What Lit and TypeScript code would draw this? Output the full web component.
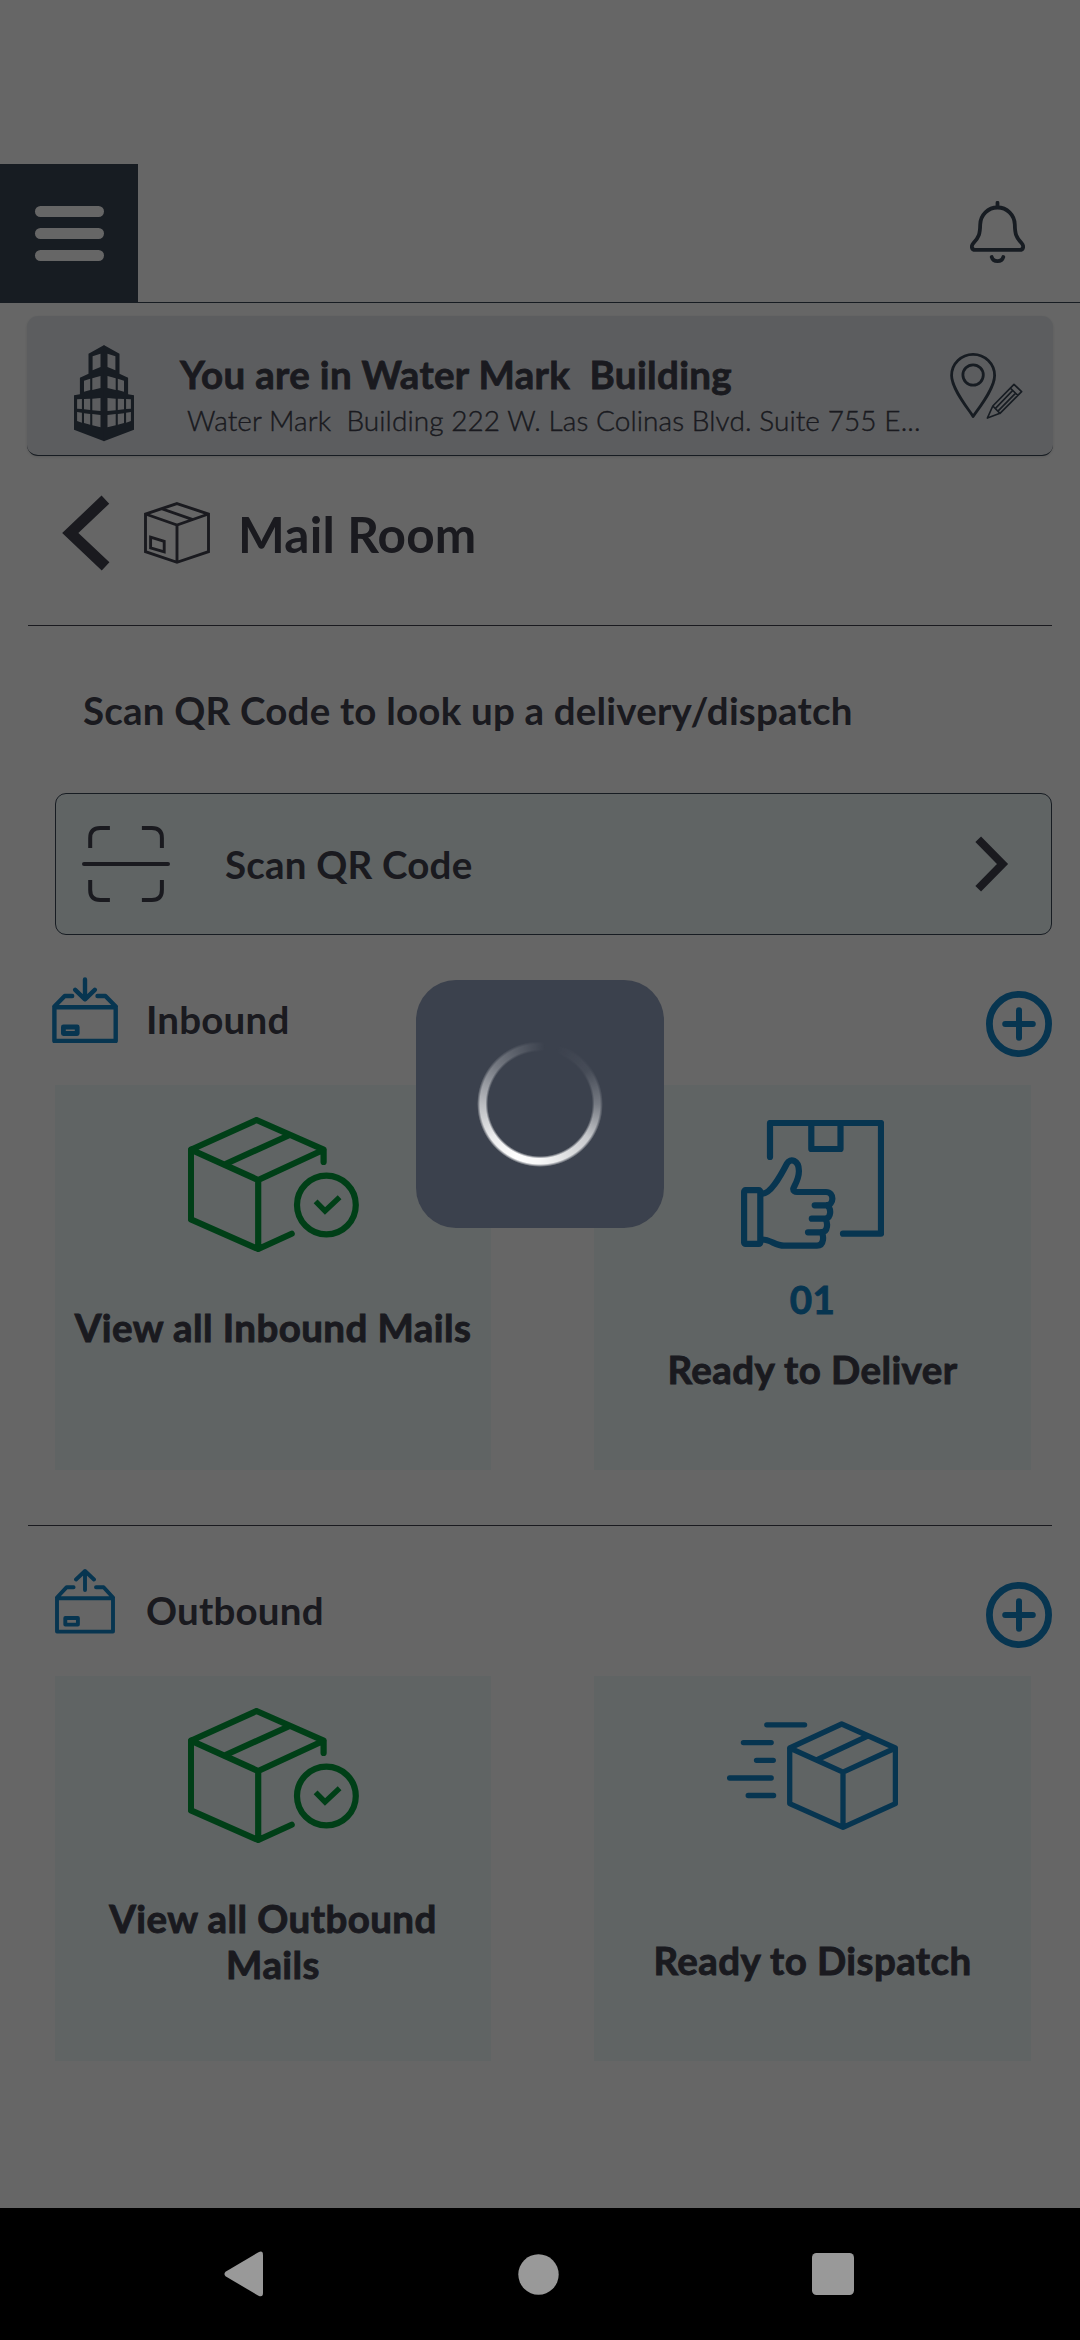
import { LitElement, html, svg, css } from "lit";
import { customElement, property } from "lit/decorators.js";

const parcelCheck = html`<svg class="ico green" width="171" height="135" viewBox="0 0 171 135" stroke-width="6.2">
  <path d="M135.6 45V32.7L68.5 3L2.9 32.7V102.3L70.2 132L103.7 116.7M2.9 32.7L70.2 63L135.6 32.7M70.2 63V132M101.6 18L37.5 47" />
  <circle cx="138.4" cy="88" r="29.4" />
  <path stroke-width="5.4" stroke-linecap="butt" stroke-linejoin="miter" d="M127.6 84.4L137 94L151.6 80.2" />
</svg>`;

const thumbBox = html`<svg class="ico blue" width="143" height="129" viewBox="0 0 143 129" stroke-width="6.2">
  <path d="M29 37V3H140V113.7H102M70.3 3V29H99.5V3" />
  <rect x="3.1" y="70.2" width="16.2" height="53.7" rx="1.5" />
  <path d="M21 73.5C29 74.5 39 57 46 43.5C49 37.5 58 40 57.9 51C58 60 52.4 67 52.2 69C52.2 71 54 72 56 72H85C93.5 72 93.5 85.3 85 85.3H73.7M86 85.3C90.5 88 90.5 98.7 84 98.7H70.8M84 98.7C87 102 87.5 112.3 80 112.3H67M80 112.3C83 115 83.5 125.7 76 125.7H43C34 125.7 30 119.5 21 119.5" />
</svg>`;

const parcelSpeed = html`<svg class="ico blue" width="171" height="111" viewBox="0 0 171 111" stroke-width="5.3">
  <path d="M114.7 4L168.4 28V83.6L116 107.3L62.7 83.6V28ZM62.7 28L116 52.2L168.4 28M116 52.2V107.3M140.8 16L89.5 40" />
  <path d="M39.8 4.8H77.6M16.4 22.6H44.2M29.5 40.3H46.3M2.6 58H44.2M21.2 75.5H46.6" />
</svg>`;

const inboundIcon = html`<svg class="ico blue" width="66" height="66" viewBox="0 0 66 66" stroke-width="4.4">
  <path d="M2.4 30.3H63.7V64H2.4ZM2.4 29.5L12.7 19H20.2M45.5 19H53.4L63.7 29.5M33 2.4V22.3M23.2 12.8L33 22.3L42.8 12.8" />
  <rect x="11.4" y="50" width="13.8" height="6.5" stroke-width="4.8" />
</svg>`;

const outboundIcon = html`<svg class="ico blue" width="60" height="66" viewBox="0 0 60 66" stroke-width="3.9">
  <path d="M2 30.3H58V63.6H2ZM2 29.5L11.7 19.2H18.6M41 19.2H48.6L58 29.5M30 3V22M21 11.5L30 3L39 11.5" />
  <rect x="10.3" y="50" width="12.6" height="6.6" />
</svg>`;

const plusIcon = html`<svg class="ico blue" width="66" height="66" viewBox="0 0 66 66">
  <circle cx="33" cy="33" r="29.6" stroke-width="6.8" />
  <path stroke-width="6" d="M19.2 33H46.8M33 19.2V46.8" />
</svg>`;

const towerHalf = svg`<path fill-rule="evenodd" d="M30.2 0L14.5 8.7V28.7L5.9 32.7V49.3L0 50.3V84.7L30.2 96.3Z
  M18.6 11.3L26.5 8.7V22L18.6 25.3Z
  M10 35.7L16.2 33.7V45L10 46.7Z M18.3 33.3L26.5 31V43L18.3 45Z
  M3.1 54.3L7.9 54V64L3.1 63.7Z M10 54L16.2 53.7V65L10 64.3Z M18.3 53.7L26.5 53V66L18.3 65.3Z
  M3.1 67L7.9 67.7V77.7L3.1 76Z M10 68.3L16.2 69V79.7L10 78Z M18.3 69L26.5 70V82.3L18.3 80.3Z" />`;

@customElement("mail-tile")
class MailTile extends LitElement {
  @property() label = "";
  @property() count: string | null = null;
  @property({ type: Boolean }) low = false;
  @property({ attribute: false }) icon: unknown = null;

  static styles = css`
    :host {
      display: flex;
      flex-direction: column;
      align-items: center;
      box-sizing: border-box;
      height: 385px;
      padding: 32px 16px 0;
      background: #eff9fa;
      font: 700 38.5px/46px Lato, "Liberation Sans", sans-serif;
      letter-spacing: 0.42px;
      -webkit-text-stroke: 0.9px currentColor;
      color: #41434f;
      text-align: center;
    }
    .art {
      display: flex;
      align-items: center;
      height: 135px;
    }
    .ico {
      display: block;
      fill: none;
      stroke-linecap: round;
      stroke-linejoin: round;
    }
    .green { stroke: #009e3a; }
    .blue { stroke: #1284c8; }
    .count {
      height: 46px;
      margin: 24px 0;
      color: #1284c8;
    }
    .high { margin-top: 52px; }
  `;

  render() {
    return html`
      <div class="art">${this.icon}</div>
      ${this.low ? html`<div class="count">${this.count}</div>` : null}
      <div class=${this.low ? "label" : "label high"}>${this.label}</div>
    `;
  }
}

@customElement("app-root")
class AppRoot extends LitElement {
  static styles = css`
    :host {
      display: block;
      position: relative;
      width: 1080px;
      height: 2340px;
      overflow: hidden;
      background: #fff;
      color: #41434f;
      font-family: Lato, "Liberation Sans", sans-serif;
      letter-spacing: 0.2px;
    }
    .screen {
      display: flex;
      flex-direction: column;
      height: 2208px;
    }
    svg { display: block; flex: none; }
    .ico {
      fill: none;
      stroke-linecap: round;
      stroke-linejoin: round;
    }
    .blue { stroke: #1284c8; }
    .header {
      display: flex;
      justify-content: space-between;
      align-items: flex-start;
      height: 138px;
      margin-top: 164px;
      border-bottom: 1px solid #3a4656;
    }
    .menu {
      display: flex;
      flex-direction: column;
      align-items: center;
      justify-content: center;
      gap: 11px;
      width: 138px;
      height: 138px;
      background: #3a4656;
    }
    .menu i {
      width: 69px;
      height: 11px;
      border-radius: 6px;
      background: #fff;
    }
    .bell { margin: 37px 55px 0 0; }
    .dark { stroke: #3a4656; }
    .place {
      display: flex;
      box-sizing: border-box;
      height: 140px;
      margin: 13px 27px 0;
      border-bottom: 1px solid #3a4656;
      border-radius: 11px;
      background: #e6e9ed;
      box-shadow: 0 1px 3px rgba(0, 0, 0, 0.12);
    }
    .tower { margin: 28.5px 0 0 47px; fill: #3a4656; }
    .where { width: 770px; margin-left: 46px; }
    .name {
      margin-top: 34px;
      font-size: 38.5px;
      font-weight: 700;
      line-height: 48px;
      letter-spacing: 0.34px;
      -webkit-text-stroke: 0.8px currentColor;
      white-space: pre;
    }
    .addr {
      margin: 5px 0 0 7px;
      font-size: 28px;
      font-weight: 300;
      line-height: 34px;
      letter-spacing: 0.08px;
      -webkit-text-stroke: 0.4px currentColor;
      white-space: pre;
    }
    .pin { margin: 36px 0 0; }
    .title {
      display: flex;
      height: 169px;
      padding-left: 62px;
    }
    .title .back { margin-top: 39px; }
    .title .box { margin: 46px 0 0 33px; }
    .title h1 {
      margin: 47.5px 0 0 28px;
      font-size: 49.5px;
      font-weight: 700;
      line-height: 60px;
    }
    .rule { height: 1px; margin: 0 28px; background: #41434f; }
    .lookup {
      height: 46px;
      margin: 61px 0 60px 83px;
      font-size: 38.5px;
      font-weight: 700;
      line-height: 46px;
    }
    .scan {
      display: flex;
      align-items: center;
      box-sizing: border-box;
      height: 142px;
      margin: 0 28px 0 55px;
      padding: 0 42px 0 26px;
      border: 1px solid #3a4656;
      border-radius: 11px;
      background: #eff9fa;
      font-size: 38.5px;
      font-weight: 700;
      line-height: 46px;
    }
    .scan span { flex: 1; margin-left: 55px; padding-bottom: 1px; }
    .section {
      display: flex;
      align-items: flex-start;
      height: 150px;
      padding: 0 28px 0 52px;
      box-sizing: border-box;
    }
    .section .mark { display: flex; justify-content: center; width: 66px; margin-top: 42px; }
    .section h2 {
      flex: 1;
      margin: 61px 0 0 28px;
      font-size: 38.5px;
      font-weight: 700;
      line-height: 46px;
    }
    .section .add { margin-top: 56px; }
    .tiles {
      display: grid;
      grid-template-columns: 436px 437px;
      gap: 103px;
      margin-left: 55px;
    }
    .gap { margin-top: 55px; }
    .veil {
      position: absolute;
      inset: 0;
      display: flex;
      align-items: center;
      justify-content: center;
      height: 2208px;
      background: rgba(0, 0, 0, 0.6);
    }
    .loader {
      display: flex;
      align-items: center;
      justify-content: center;
      width: 248px;
      height: 248px;
      border-radius: 40px;
      background: #3b414d;
    }
    .ring {
      width: 126px;
      height: 126px;
      border-radius: 50%;
      background: conic-gradient(
        from 15deg,
        rgba(255, 255, 255, 0) 0deg,
        rgba(255, 255, 255, 0.06) 40deg,
        rgba(255, 255, 255, 0.3) 75deg,
        rgba(255, 255, 255, 0.72) 110deg,
        rgba(255, 255, 255, 0.96) 165deg,
        #fff 190deg,
        rgba(255, 255, 255, 0.9) 220deg,
        rgba(255, 255, 255, 0.65) 255deg,
        rgba(255, 255, 255, 0.3) 295deg,
        rgba(255, 255, 255, 0.08) 335deg,
        rgba(255, 255, 255, 0) 350deg
      );
      -webkit-mask: radial-gradient(circle closest-side, transparent 52px, #000 54.5px, #000 60px, transparent 63px);
      mask: radial-gradient(circle closest-side, transparent 52px, #000 54.5px, #000 60px, transparent 63px);
    }
    .nav {
      display: flex;
      align-items: center;
      justify-content: space-between;
      box-sizing: border-box;
      height: 132px;
      padding: 0 226px 0 224px;
      background: #000;
      fill: #999;
    }
  `;

  render() {
    return html`
      <div class="screen">
        <div class="header">
          <div class="menu"><i></i><i></i><i></i></div>
          <svg class="ico dark bell" width="55" height="63" viewBox="0 0 55 63" stroke-width="3.8">
            <path d="M27.5 6.5C18 6.5 10.6 14 10.2 23.5C10 33 9 36 3.5 42C0.9 44.8 1.2 48.9 5.5 48.9H49.5C53.8 48.9 54.1 44.8 51.5 42C46 36 45 33 44.8 23.5C44.4 14 37 6.5 27.5 6.5Z" />
            <path d="M27.5 1.8V6M21.7 56A6 5.6 0 0 0 33.3 56" />
          </svg>
        </div>

        <div class="place">
          <svg class="tower" width="60" height="97" viewBox="0 0 60 97">
            ${towerHalf}
            <g transform="translate(60 0) scale(-1 1)">${towerHalf}</g>
          </svg>
          <div class="where">
            <div class="name">You are in Water Mark  Building</div>
            <div class="addr">Water Mark  Building 222 W. Las Colinas Blvd. Suite 755 E...</div>
          </div>
          <svg class="ico dark pin" width="74" height="69" viewBox="0 0 74 69" stroke-width="2.8">
            <path d="M23.1 64.5C18.5 57 1.6 37 1.6 23.5A21.5 21.2 0 0 1 44.6 23.5C44.6 37 28 57 23.1 64.5Z" />
            <circle cx="23.1" cy="23" r="10.2" />
            <path stroke-width="1.7" d="M37.4 66L42.8 54L64 32.3L71.6 39.7L50 61.3ZM60.3 36L67.8 43.4M42.8 54L50 61.3M45.7 56.2L62.3 38.9M48.2 58.8L65.4 41.4" />
          </svg>
        </div>

        <div class="title">
          <svg class="back" width="49" height="76" viewBox="0 0 49 76" fill="none" stroke="#41434f" stroke-width="11.2">
            <path d="M43.4 4.6L8.3 38L43.6 71.4" />
          </svg>
          <svg class="box" width="66" height="62" viewBox="0 0 66 62" fill="none" stroke="#41434f" stroke-width="2.9">
            <path d="M33 1.6L64.5 12V49.7L33 60.3L1.5 49.7V12ZM1.5 12L33 23L64.5 12M33 23V60.3M18.3 7L48.2 17.4M6.6 35.2L20.2 39.3V49.8L6.6 45.8Z" />
          </svg>
          <h1>Mail Room</h1>
        </div>
        <div class="rule"></div>
        <div class="lookup">Scan QR Code to look up a delivery/dispatch</div>

        <div class="scan">
          <svg width="88" height="76" viewBox="0 0 88 76" fill="none" stroke="#41434f" stroke-width="4">
            <path d="M8.2 22V12Q8.2 2 18.2 2H27.9M59.9 2H69.9Q79.9 2 79.9 12V22M79.9 54V64Q79.9 74 69.9 74H59.9M27.9 74H18.2Q8.2 74 8.2 64V54" />
            <path stroke-linecap="round" d="M2 38H86" />
          </svg>
          <span>Scan QR Code</span>
          <svg width="34" height="56" viewBox="0 0 34 56" fill="none" stroke="#41434f" stroke-width="8">
            <path d="M3.2 3.3L27.5 28L3.2 52.7" />
          </svg>
        </div>

        <div class="section">
          <div class="mark">${inboundIcon}</div>
          <h2>Inbound</h2>
          <div class="add">${plusIcon}</div>
        </div>
        <div class="tiles">
          <mail-tile .icon=${parcelCheck} label="View all Inbound Mails"></mail-tile>
          <mail-tile .icon=${thumbBox} low count="01" label="Ready to Deliver"></mail-tile>
        </div>

        <div class="rule gap"></div>
        <div class="section">
          <div class="mark">${outboundIcon}</div>
          <h2>Outbound</h2>
          <div class="add">${plusIcon}</div>
        </div>
        <div class="tiles">
          <mail-tile .icon=${parcelCheck} label="View all Outbound Mails"></mail-tile>
          <mail-tile .icon=${parcelSpeed} low label="Ready to Dispatch"></mail-tile>
        </div>
      </div>

      <div class="nav">
        <svg width="40" height="46" viewBox="0 0 40 46"><path d="M1.5 20.7L34.5 1.2Q39 -0.8 39 4V42Q39 46.6 34.5 44.8L1.5 25.2Q-0.6 23 1.5 20.7Z" /></svg>
        <svg width="41" height="41" viewBox="0 0 41 41"><circle cx="20.5" cy="20.5" r="20.2" /></svg>
        <svg width="42" height="42" viewBox="0 0 42 42"><rect width="42" height="42" rx="4.5" /></svg>
      </div>

      <div class="veil">
        <div class="loader"><div class="ring"></div></div>
      </div>
    `;
  }
}
